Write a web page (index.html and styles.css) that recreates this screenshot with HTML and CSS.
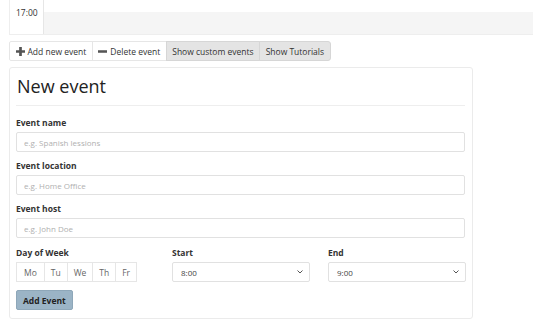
FILE: index.html
```html
<!DOCTYPE html>
<html lang="en">
<head>
  <meta charset="UTF-8">
  <title>Schedule</title>
  <link rel="stylesheet" href="styles.css">
</head>
<body>
  <div class="page">
    <div class="calendar">
      <div class="time">17:00</div>
      <div class="slot"><div class="slot-fill"></div></div>
    </div>

    <div class="toolbar">
      <button class="tool">
        <svg width="9" height="9" viewBox="0 0 10 10"><path d="M3.5 0h3v3.5H10v3H6.5V10h-3V6.5H0v-3h3.5z" fill="#555"/></svg>
        Add new event
      </button>
      <button class="tool">
        <svg width="9" height="9" viewBox="0 0 10 10"><rect x="0" y="3.6" width="10" height="2.8" fill="#555"/></svg>
        Delete event
      </button>
      <button class="tool active">Show custom events</button>
      <button class="tool active">Show Tutorials</button>
    </div>

    <div class="panel">
      <h1 class="title">New event</h1>

      <div class="field">
        <label>Event name</label>
        <input type="text" placeholder="e.g. Spanish lessions">
      </div>
      <div class="field">
        <label>Event location</label>
        <input type="text" placeholder="e.g. Home Office">
      </div>
      <div class="field">
        <label>Event host</label>
        <input type="text" placeholder="e.g. John Doe">
      </div>

      <div class="row">
        <div class="field">
          <label>Day of Week</label>
          <div class="days">
            <button>Mo</button>
            <button>Tu</button>
            <button>We</button>
            <button>Th</button>
            <button>Fr</button>
          </div>
        </div>
        <div class="field">
          <label>Start</label>
          <div class="select-wrap">
            <select><option>8:00</option></select>
            <svg class="chevron" width="6" height="4" viewBox="0 0 6 4"><path d="M0.5 0.5L3 3L5.5 0.5" fill="none" stroke="#555" stroke-width="1"/></svg>
          </div>
        </div>
        <div class="field">
          <label>End</label>
          <div class="select-wrap">
            <select><option>9:00</option></select>
            <svg class="chevron" width="6" height="4" viewBox="0 0 6 4"><path d="M0.5 0.5L3 3L5.5 0.5" fill="none" stroke="#555" stroke-width="1"/></svg>
          </div>
        </div>
      </div>

      <button class="submit">Add Event</button>
    </div>
  </div>
</body>
</html>
```

FILE: styles.css
```css
body {
  margin: 0;
  font-family: "Open Sans", "Noto Sans", sans-serif;
  color: #333;
  background: #fff;
}
.page {
  padding-left: 9px;
}
.calendar {
  display: flex;
  height: 34px;
  border-left: 1px solid #eee;
  border-bottom: 1px solid #eee;
}
.time {
  width: 34px;
  box-sizing: border-box;
  border-right: 1px solid #e6e6e6;
  font-size: 8.5px;
  padding: 7px 0 0 6px;
}
.slot {
  flex: 1;
  padding-top: 12px;
  display: flex;
}
.slot-fill {
  flex: 1;
  background: #f5f5f5;
}
.toolbar {
  display: flex;
  margin-top: 6px;
  margin-left: 1px;
}
.tool {
  font-family: inherit;
  font-size: 8.5px;
  color: #333;
  height: 20px;
  padding: 0 5.5px;
  background: #fff;
  border: 1px solid #e6e6e6;
  margin-left: -1px;
  display: flex;
  align-items: center;
  gap: 3px;
}
.tool:first-child {
  border-radius: 2px 0 0 2px;
}
.tool:last-child {
  border-radius: 0 3px 3px 0;
}
.tool.active {
  background: #e4e4e4;
  border-color: #d6d6d6;
}
.panel {
  width: 464px;
  box-sizing: border-box;
  margin-top: 6px;
  border: 1px solid #ebebeb;
  border-radius: 3px;
  padding: 5px 7px 8px 6px;
}
.title {
  font-size: 18px;
  font-weight: 400;
  line-height: 26px;
  margin: 0 0 11px;
  padding: 0 0 6px 1px;
  border-bottom: 1px solid #eee;
  color: #222;
}
.field {
  display: flex;
  flex-direction: column;
  margin-top: 8px;
}
.field label {
  font-size: 8.5px;
  font-weight: 700;
  line-height: 12px;
  color: #333;
  margin-bottom: 3px;
}
.field input,
.field select {
  display: block;
  font-family: inherit;
  font-size: 8px;
  height: 20px;
  width: 100%;
  box-sizing: border-box;
  border: 1px solid #e1e1e1;
  border-radius: 2px;
  padding: 0 7px;
  color: #444;
  background: #fff;
}
.field input::placeholder {
  color: #b0b0b0;
}
.field select {
  appearance: none;
  padding: 0 8px;
}
.select-wrap {
  position: relative;
}
.chevron {
  position: absolute;
  right: 7px;
  top: 8px;
  pointer-events: none;
}
.row {
  display: grid;
  grid-template-columns: 138px 138px 138px;
  column-gap: 18px;
}
.row .field {
  margin-top: 9px;
}
.days {
  display: flex;
  width: max-content;
}
.days button {
  font-family: inherit;
  font-size: 8.5px;
  color: #666;
  height: 20px;
  background: #fff;
  border: 1px solid #e6e6e6;
  margin-left: -1px;
  padding: 0 6px;
}
.days button:first-child {
  margin-left: 0;
  padding: 0 7px;
}
.submit {
  display: block;
  margin-top: 8px;
  font-family: inherit;
  font-size: 8.5px;
  font-weight: 700;
  color: #222;
  height: 20px;
  padding: 0 6px;
  background: #9bb4c6;
  border: 1px solid #8ea7b9;
  border-radius: 2px;
}
```
